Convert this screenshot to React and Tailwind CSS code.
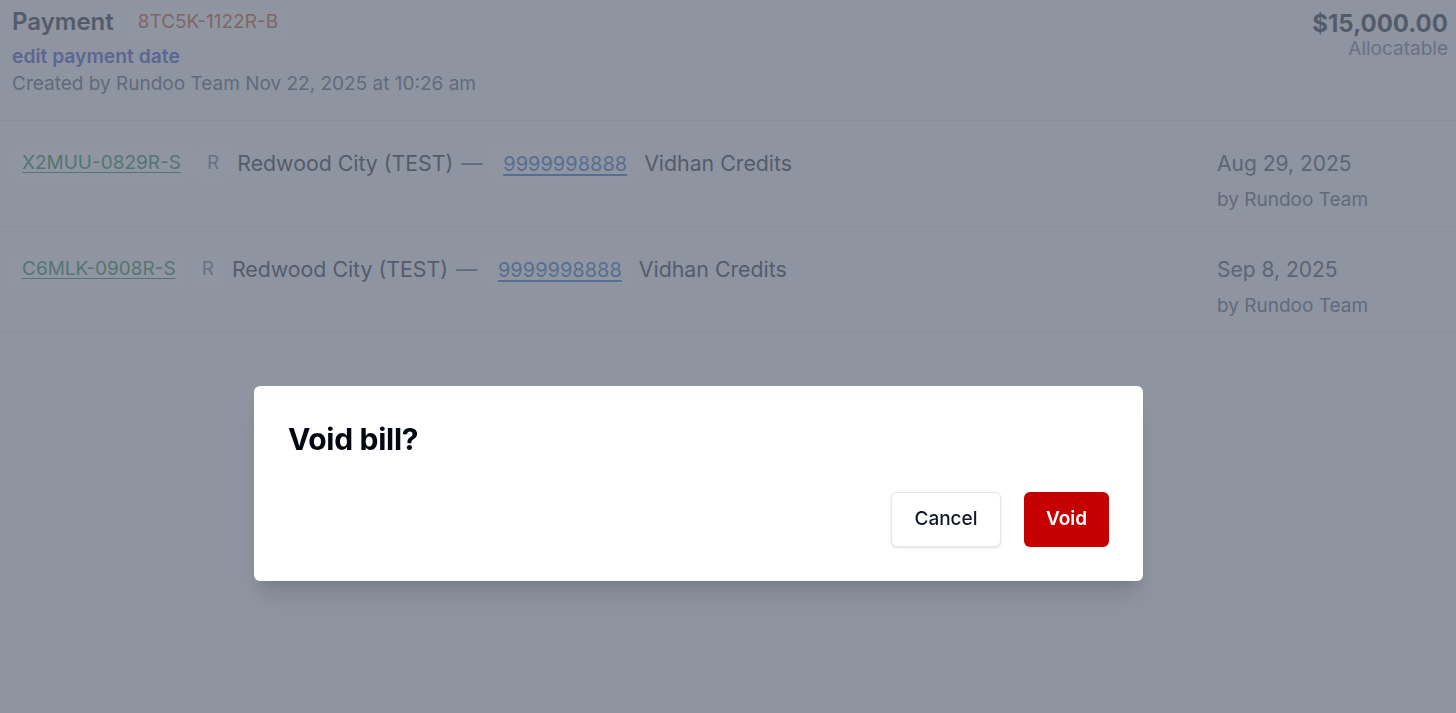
import React from 'react';

const rows = [
    { id: 'X2MUU-0829R-S', phone: '9999998888', date: 'Aug 29, 2025' },
    { id: 'C6MLK-0908R-S', phone: '9999998888', date: 'Sep 8, 2025' },
];

const App = () => {
    return (
        <div className="min-h-screen bg-gray-50 font-['Inter',sans-serif] text-gray-900">
            {/* Payment header */}
            <header className="flex justify-between border-b border-gray-200 pl-3 pr-2">
                <div className="pt-[7px] pb-[22px]">
                    <div className="flex items-center gap-3">
                        <h1 className="text-[24px] leading-[30px] font-semibold text-gray-900">Payment</h1>
                        <span className="bg-white rounded px-3 h-[27px] flex items-center text-[19px] text-[#c2410c]">
                            8TC5K-1122R-B
                        </span>
                    </div>
                    <a className="block mt-[5px] text-[19.3px] leading-[28px] font-semibold text-[#2f44c8]">edit payment date</a>
                    <p className="text-[19px] leading-[28px] text-gray-600">Created by Rundoo Team Nov 22, 2025 at 10:26 am</p>
                </div>
                <div className="pt-[9px] text-right">
                    <p className="text-[24px] leading-[29px] font-bold text-gray-900">$15,000.00</p>
                    <p className="text-[19px] leading-[22px] text-gray-500">Allocatable</p>
                </div>
            </header>

            {/* Allocated bills */}
            {rows.map((row) => (
                <div key={row.id} className="flex border-b border-gray-200 pl-3 pt-[27px] pb-[14px]">
                    <div className="flex-1 flex items-center gap-[7px] h-[31px]">
                        <span className="bg-white rounded h-[31px] flex items-center pl-[10px] pr-[8px] text-[19px] text-[#15803d] underline underline-offset-[3px]">
                            {row.id}
                        </span>
                        <span className="bg-white rounded h-[31px] flex items-center px-[11px] text-[19px] text-gray-500">R</span>
                        <span className="text-[21.3px] text-gray-900">Redwood City (TEST)</span>
                        <span className="text-[21px] text-gray-600 px-px">—</span>
                        <span className="bg-white rounded h-[31px] flex items-center pl-[13px] pr-[10px] text-[20px] text-[#1e63c0] underline underline-offset-[3px]">
                            {row.phone}
                        </span>
                        <span className="text-[21.3px] text-gray-900">Vidhan Credits</span>
                    </div>
                    <div className="w-[239px] shrink-0 pt-[2px]">
                        <p className="text-[21px] leading-[28px] text-gray-700">{row.date}</p>
                        <p className="mt-[10px] text-[19px] leading-[24px] text-gray-600">by Rundoo Team</p>
                    </div>
                </div>
            ))}

            {/* Modal backdrop */}
            <div className="fixed inset-0 bg-gray-500/75"></div>

            {/* Void dialog */}
            <div className="fixed left-[254px] top-[386px] w-[889px] bg-white rounded-md shadow-xl p-[34px]">
                <h2 className="text-[30px] leading-[38px] font-bold tracking-[-0.01em] text-gray-950">Void bill?</h2>
                <div className="mt-[34px] flex justify-end gap-[23px]">
                    <button className="h-[55px] w-[110px] rounded-md border border-gray-200 bg-white shadow-sm text-[19px] font-medium text-gray-900">
                        Cancel
                    </button>
                    <button className="h-[55px] w-[85px] rounded-md bg-[#c50000] text-[19px] font-semibold text-white">
                        Void
                    </button>
                </div>
            </div>
        </div>
    );
};

export default App;
